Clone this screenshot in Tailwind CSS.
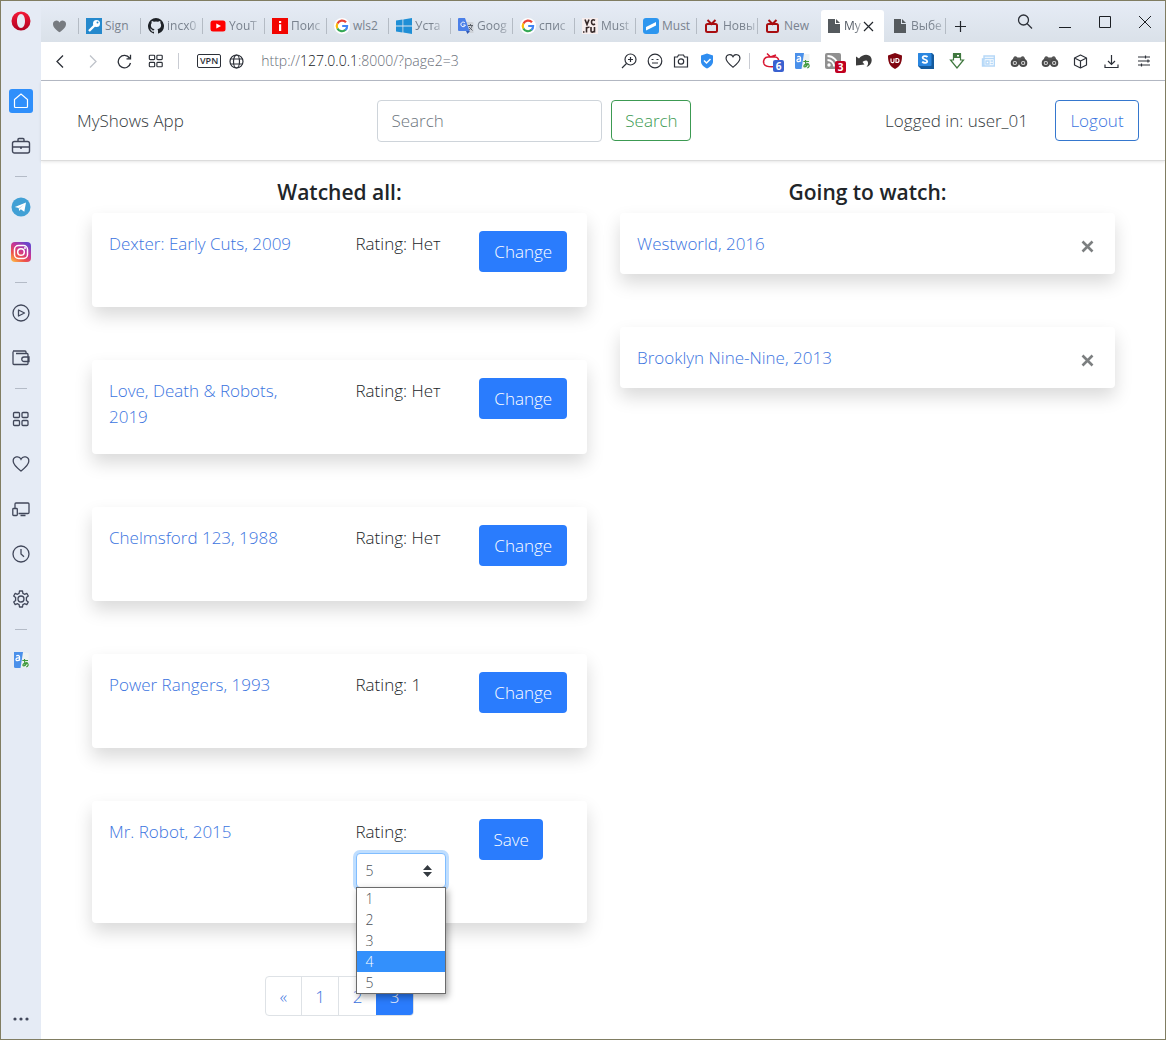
<!DOCTYPE html>
<html lang="en">
<head>
<meta charset="utf-8">
<title>MyShows App</title>
<script src="https://cdn.jsdelivr.net/npm/@tailwindcss/browser@4"></script>
</head>
<body class="flex min-h-screen border border-[#807d62] bg-white font-['Open_Sans','Noto_Sans',sans-serif] text-[17px] leading-[26px] font-[340] text-[#212529]">

<svg class="hidden" aria-hidden="true">
  <symbol id="google" viewBox="0 0 16 16"><circle cx="8" cy="8" r="8" fill="#fff"/><g fill="none" stroke-width="2.2"><path d="M12 4.3A5.2 5.2 0 0 0 3.4 5.6" stroke="#ea4335"/><path d="M3.4 5.5a5.2 5.2 0 0 0 0 5" stroke="#fbbc05"/><path d="M3.4 10.4a5.2 5.2 0 0 0 8.2 1.4" stroke="#34a853"/><path d="M11.4 12A5 5 0 0 0 13.1 8H8.2" stroke="#4285f4"/></g></symbol>
  <symbol id="tv" viewBox="0 0 16 16"><g fill="none" stroke="#a80d10" stroke-width="2"><rect x="2" y="6" width="11" height="8" rx="1.5"/><path d="M3.500 2l4 4 4-4"/></g></symbol>
  <symbol id="file" viewBox="0 0 16 16"><path d="M2 1h7v5h5v9H2z" fill="#555a5e"/><path d="M10 1l4 4h-4z" fill="#555a5e"/></symbol>
  <symbol id="heart" viewBox="0 0 18 18"><path d="M9 16C5 12.800 1.200 9.800 1.200 6.200A4.100 4.100 0 0 1 9 4.200a4.100 4.100 0 0 1 7.800 2C16.800 9.800 13 12.800 9 16z"/></symbol>
  <symbol id="tiles" viewBox="0 0 18 18"><rect x="1.500" y="2.500" width="6" height="5" rx="1"/><rect x="10" y="2.500" width="6" height="5" rx="1"/><rect x="1.500" y="10.500" width="6" height="5" rx="1"/><rect x="10" y="10.500" width="6" height="5" rx="1"/></symbol>
  <symbol id="translate" viewBox="0 0 18 18"><path d="M8 2h8.500v14.500H8z" fill="#eef2f2"/><path d="M2 1h9L8.500 17h-5A1.500 1.500 0 0 1 2 15.500z" fill="#4a90ea"/><path d="M4.200 5c2-1 3.300-.5 3.300 1v3.700M7.500 7c-2-.2-3.500.2-3.500 1.600 0 1.500 2.500 1.300 3.500 0" fill="none" stroke="#fff" stroke-width="1.300"/><path d="M10.300 9.500h5.700M12.500 8c0 3 .2 5.500.8 7M15.200 11c-.8 2.500-2.700 4.300-4 3.800-1.300-1.300 2-3.700 4.200-2.500 1.500 1 .7 3-1.100 3.500" fill="none" stroke="#3f9a3c" stroke-width="1.200"/></symbol>
  <symbol id="binoculars" viewBox="0 0 18 18"><path d="M1 11.500 3.500 5.500Q5 3 7.500 5.500h3Q13 3 14.500 5.500L17 11.500l-8 1z" fill="#555"/><g fill="#eee" stroke="#4a4a4a" stroke-width="2"><circle cx="4.800" cy="11" r="3.100"/><circle cx="13.200" cy="11" r="3.100"/></g><circle cx="4.800" cy="11" r="1.200" fill="#555"/><circle cx="13.200" cy="11" r="1.200" fill="#555"/></symbol>
</svg>

<aside class="flex w-10 shrink-0 flex-col items-center bg-[#e5ebf5]">
  <button class="flex h-[77px] w-10 justify-center pt-[10px]" aria-label="Opera menu"><svg class="size-5" viewBox="0 0 20 20"><defs><linearGradient id="og" x1="0" x2="0" y1="0" y2="1"><stop offset="0" stop-color="#f51a38"/><stop offset="1" stop-color="#b00020"/></linearGradient></defs><path fill="url(#og)" fill-rule="evenodd" d="M10 .5a9.500 9.500 0 1 0 0 19 9.500 9.500 0 0 0 0-19zM10 3c2.500 0 4 3 4 7s-1.500 7-4 7-4-3-4-7 1.500-7 4-7z"/></svg></button>
  <nav class="flex w-full grow flex-col items-center" aria-label="Sidebar">
    <a href="#" aria-label="Speed dial" class="flex h-[45px] items-center"><span class="flex size-6 items-center justify-center rounded-[3px] bg-[#2f8ffb]"><svg class="size-[18px]" viewBox="0 0 18 18" fill="none" stroke="#fff" stroke-width="1.200"><path d="M2.500 7.500 9 2l6.500 5.500v7a1 1 0 0 1-1 1h-11a1 1 0 0 1-1-1z"/></svg></span></a>
    <a href="#" aria-label="Workspace" class="flex h-[45px] items-center"><svg class="size-5" viewBox="0 0 20 20" fill="none" stroke="#41475a" stroke-width="1.400"><rect x="1.500" y="5.500" width="17" height="11.500" rx="2"/><path d="M7 5V3.500a1 1 0 0 1 1-1h4a1 1 0 0 1 1 1V5M1.500 11h17M9 12h2"/></svg></a>
    <span class="flex h-4 items-center"><i class="h-px w-3 bg-[#b4bbc7]"></i></span>
    <a href="#" aria-label="Telegram" class="flex h-[45px] items-center"><svg class="size-5" viewBox="0 0 20 20"><circle cx="10" cy="10" r="9.500" fill="#41a0d5"/><path d="M3.800 10 15 5.500 13.300 14.800 9.800 12.300 8.200 14l-.5-3z" fill="#fff"/><path d="M7.700 11 13 7.500l-4.500 4.300" fill="#b7d8ee"/></svg></a>
    <a href="#" aria-label="Instagram" class="flex h-[45px] items-center"><svg class="size-5" viewBox="0 0 20 20"><defs><linearGradient id="ig" x1="0" y1="1" x2=".7" y2="0"><stop offset="0" stop-color="#ffc94a"/><stop offset=".35" stop-color="#ee5348"/><stop offset=".65" stop-color="#c93494"/><stop offset="1" stop-color="#6a45cc"/></linearGradient></defs><rect width="20" height="20" rx="4" fill="url(#ig)"/><g fill="none" stroke="#fff" stroke-width="1.500"><rect x="3.500" y="3.500" width="13" height="13" rx="4"/><circle cx="10" cy="10" r="3.300"/></g><circle cx="14" cy="6" r="1" fill="#fff"/></svg></a>
    <span class="flex h-4 items-center"><i class="h-px w-3 bg-[#b4bbc7]"></i></span>
    <a href="#" aria-label="Player" class="flex h-[45px] items-center"><svg class="size-[18px]" viewBox="0 0 18 18" fill="none" stroke="#41475a" stroke-width="1.300"><circle cx="9" cy="9" r="8"/><path d="M6.500 6v6l6-3z" stroke-linejoin="round"/></svg></a>
    <a href="#" aria-label="Wallet" class="flex h-[45px] items-center"><svg class="size-[18px]" viewBox="0 0 18 18" fill="none" stroke="#41475a" stroke-width="1.300"><path d="M1 2.500v12a1 1 0 0 0 1 1h13a1 1 0 0 0 1-1v-9a1 1 0 0 0-1-1H4M1 2h12a1 1 0 0 1 1 1v1M17 8h-5a2 2 0 0 0 0 4.500h5z"/></svg></a>
    <span class="flex h-4 items-center"><i class="h-px w-3 bg-[#b4bbc7]"></i></span>
    <a href="#" aria-label="Tiles" class="flex h-[45px] items-center"><svg class="size-[18px] fill-none stroke-[#41475a]" stroke-width="1.300"><use href="#tiles"/></svg></a>
    <a href="#" aria-label="Bookmarks" class="flex h-[45px] items-center"><svg class="size-[18px] fill-none stroke-[#41475a]" stroke-width="1.300"><use href="#heart"/></svg></a>
    <a href="#" aria-label="My Flow" class="flex h-[45px] items-center"><svg class="size-[18px]" viewBox="0 0 18 18" fill="none" stroke="#41475a" stroke-width="1.300"><path d="M3 8V4a1 1 0 0 1 1-1h12a1 1 0 0 1 1 1v8.500a1 1 0 0 1-1 1H6.500M8.500 15.500h5"/><rect x=".8" y="8.500" width="4.500" height="7" rx=".8"/></svg></a>
    <a href="#" aria-label="History" class="flex h-[45px] items-center"><svg class="size-[18px]" viewBox="0 0 18 18" fill="none" stroke="#41475a" stroke-width="1.300"><circle cx="9" cy="9" r="8"/><path d="M9 4v5l3 2.800"/></svg></a>
    <a href="#" aria-label="Settings" class="flex h-[45px] items-center"><svg class="size-[18px]" viewBox="0 0 18 18" fill="none" stroke="#41475a" stroke-width="1.300" stroke-linejoin="round"><circle cx="9" cy="9" r="3"/><path d="M7.500 1h3l.4 2.400 1.600.9 2.300-.9 1.500 2.600-1.900 1.500v3l1.900 1.500-1.500 2.600-2.300-.9-1.600.9-.4 2.400h-3l-.4-2.400-1.600-.9-2.300.9L1.700 12l1.900-1.500v-3L1.700 6l1.500-2.600 2.300.9 1.600-.9z"/></svg></a>
    <span class="flex h-4 items-center"><i class="h-px w-3 bg-[#b4bbc7]"></i></span>
    <a href="#" aria-label="Translator" class="flex h-[45px] items-center"><svg class="size-[18px]"><use href="#translate"/></svg></a>
  </nav>
  <button class="flex h-10 w-10 items-center justify-center" aria-label="Sidebar setup"><svg class="h-1 w-4" viewBox="0 0 16 4" fill="#41475a"><circle cx="2" cy="2" r="1.600"/><circle cx="8" cy="2" r="1.600"/><circle cx="14" cy="2" r="1.600"/></svg></button>
</aside>

<div class="flex min-w-0 grow flex-col">
  <div class="flex h-[41px] items-end bg-linear-to-b from-[#e6ecf6] to-[#dae1e9] text-[12px] leading-4 font-normal text-[#79828e]">
    <button class="flex h-8 w-[37px] items-center justify-center" aria-label="Pinboards"><svg class="size-[15px] fill-[#777b80]"><use href="#heart"/></svg></button>
    <nav class="flex h-8 items-center" aria-label="Tabs">
      <a href="#" class="flex h-4 w-[62px] items-center border-l border-[#b4bbc4] pl-[7px]"><svg class="size-4 shrink-0" viewBox="0 0 16 16"><path fill="#2589cd" d="M0 0h16v16H0z"/><circle cx="10.500" cy="5.500" r="3.500" fill="#fff"/><path d="M9 7l-6 6" stroke="#fff" stroke-width="2.400"/><circle cx="11.500" cy="4.500" r="1" fill="#2589cd"/></svg><span class="ml-[3px]">Sign</span></a>
      <a href="#" class="flex h-4 w-[62px] items-center border-l border-[#b4bbc4] pl-[7px]"><svg class="size-4 shrink-0" viewBox="0 0 16 16" fill="#1e2227"><path d="M8 0a8 8 0 0 0-2.500 15.600c.4.100.5-.2.500-.4v-1.500c-2 .5-2.600-.9-2.800-1.300-.1-.3-.5-.9-.9-1.100-.3-.2-.7-.6 0-.6s1.200.6 1.300.8c.7 1.200 1.900.9 2.400.7 0-.5.300-.9.500-1.100-1.800-.2-3.600-.9-3.600-4 0-.9.300-1.600.8-2.100 0-.2-.4-1 .1-2.100 0 0 .7-.2 2.200.8a7.400 7.400 0 0 1 4 0c1.500-1 2.200-.8 2.200-.8.400 1.100.2 1.900.1 2.100.5.500.8 1.200.8 2.100 0 3.100-1.900 3.800-3.700 4 .3.200.6.700.6 1.500v2.600c0 .2.100.5.500.4A8 8 0 0 0 8 0z"/></svg><span class="ml-[3px] [mask-image:linear-gradient(to_right,black_70%,#0006)]">incx0</span></a>
      <a href="#" class="flex h-4 w-[62px] items-center border-l border-[#b4bbc4] pl-[7px]"><svg class="size-4 shrink-0" viewBox="0 0 16 16"><rect x=".5" y="2.500" width="15" height="11" rx="2.500" fill="#f00"/><path d="M6.300 5.500v5L11 8z" fill="#fff"/></svg><span class="ml-[3px] [mask-image:linear-gradient(to_right,black_70%,#0006)]">YouT</span></a>
      <a href="#" class="flex h-4 w-[62px] items-center border-l border-[#b4bbc4] pl-[7px]"><svg class="size-4 shrink-0" viewBox="0 0 16 16"><path fill="#f20500" d="M0 0h16v16H0z"/><path fill="#fff" d="M7 3h2.200v2H7zM7 6.200h2.200V13H7z"/></svg><span class="ml-[3px] [mask-image:linear-gradient(to_right,black_70%,#0006)]">Поис</span></a>
      <a href="#" class="flex h-4 w-[62px] items-center border-l border-[#b4bbc4] pl-[7px]"><svg class="size-4 shrink-0"><use href="#google"/></svg><span class="ml-[3px]">wls2</span></a>
      <a href="#" class="flex h-4 w-[62px] items-center border-l border-[#b4bbc4] pl-[7px]"><svg class="size-4 shrink-0" viewBox="0 0 16 16" fill="#1f8fd6"><path d="M0 2.500 6.500 1.500v6H0zM7.300 1.400 16 0v7.500H7.300zM0 8.400h6.500v6L0 13.500zM7.300 8.400H16V16l-8.700-1.400z"/></svg><span class="ml-[3px] [mask-image:linear-gradient(to_right,black_70%,#0006)]">Уста</span></a>
      <a href="#" class="flex h-4 w-[62px] items-center border-l border-[#b4bbc4] pl-[7px]"><svg class="size-4 shrink-0" viewBox="0 0 16 16"><path d="M6 4h8.500a1 1 0 0 1 1 1v10H9z" fill="#cfd3d9"/><path d="M1 0h6l4.500 13H1a1 1 0 0 1-1-1V1a1 1 0 0 1 1-1z" fill="#4c80e8"/><path d="M8 13h4l-2.500 3z" fill="#3059b5"/><path d="M7 5a2.300 2.300 0 1 0 .4 2H5.300" fill="none" stroke="#fff" stroke-width="1"/><path d="M10 7.500h5M12.500 6v1.500M14 8c-.5 2-2 3.500-3 4M11 9l3.500 3.500" fill="none" stroke="#5b6069"/></svg><span class="ml-[3px] [mask-image:linear-gradient(to_right,black_70%,#0006)]">Goog</span></a>
      <a href="#" class="flex h-4 w-[62px] items-center border-l border-[#b4bbc4] pl-[7px]"><svg class="size-4 shrink-0"><use href="#google"/></svg><span class="ml-[3px] [mask-image:linear-gradient(to_right,black_70%,#0006)]">спис</span></a>
      <a href="#" class="flex h-4 w-[61px] items-center border-l border-[#b4bbc4] pl-[7px]"><svg class="size-4 shrink-0" viewBox="0 0 16 16"><path fill="#f8eeee" d="M0 0h16v16H0z"/><path d="M3 1.500l2 5 2-5M13 2.500c-2-1.500-3.500-.5-3.500 1.500s1.500 3.500 3.500 2M4.500 14.500V9M4.500 10.500c.5-1.300 1.500-1.300 3-1.200M9 9v4c0 1.500 2.500 1.500 3.500 0V9v5.500M1 14h1.500" fill="none" stroke="#352828" stroke-width="1.600"/></svg><span class="ml-[3px] [mask-image:linear-gradient(to_right,black_70%,#0006)]">Must</span></a>
      <a href="#" class="flex h-4 w-[61px] items-center border-l border-[#b4bbc4] pl-[7px]"><svg class="size-4 shrink-0" viewBox="0 0 16 16"><rect width="16" height="16" rx="3" fill="#2d96ef"/><path d="M3 9 13 4v3.500L3 12.500z" fill="#fff"/></svg><span class="ml-[3px]">Must</span></a>
      <a href="#" class="flex h-4 w-[61px] items-center border-l border-[#b4bbc4] pl-[7px]"><svg class="size-4 shrink-0"><use href="#tv"/></svg><span class="ml-[3px] [mask-image:linear-gradient(to_right,black_70%,#0006)]">Новы</span></a>
      <a href="#" class="flex h-4 w-16 items-center border-l border-[#b4bbc4] pl-[7px]"><svg class="size-4 shrink-0"><use href="#tv"/></svg><span class="ml-[3px]">New</span></a>
      <div class="flex h-8 w-[63px] items-center rounded-t-[3px] bg-white pl-[5px] text-[#555c66]"><a href="#" class="flex items-center"><svg class="size-4 shrink-0"><use href="#file"/></svg><span class="ml-[2px] [mask-image:linear-gradient(to_right,black_60%,#0006)]">My</span></a><button class="flex size-4 items-center justify-center" aria-label="Close tab"><svg class="size-[11px]" viewBox="0 0 11 11" stroke="#22262c" stroke-width="1.200"><path d="M1 1l9 9M10 1l-9 9"/></svg></button></div>
      <a href="#" class="flex h-4 w-[62px] items-center border-r border-[#b4bbc4] pl-2"><svg class="size-4 shrink-0"><use href="#file"/></svg><span class="ml-[3px] [mask-image:linear-gradient(to_right,black_70%,#0006)]">Выбе</span></a>
      <button class="flex size-7 items-center justify-center" aria-label="New tab"><svg class="size-[11px]" viewBox="0 0 11 11" stroke="#22262c" stroke-width="1.200"><path d="M5.500 0v11M0 5.500h11"/></svg></button>
    </nav>
    <div class="ml-auto flex h-[41px]">
      <button class="flex w-10 items-center justify-center" aria-label="Search tabs"><svg class="size-4" viewBox="0 0 16 16" fill="none" stroke="#2c3038" stroke-width="1.300"><circle cx="6.500" cy="6" r="5"/><path d="M10 9.500l5 5"/></svg></button>
      <button class="flex w-10 items-center justify-center" aria-label="Minimize"><svg class="h-3 w-3" viewBox="0 0 12 12" stroke="#1c1f24"><path d="M0 11.500h12"/></svg></button>
      <button class="flex w-10 items-center justify-center" aria-label="Maximize"><svg class="h-3 w-3" viewBox="0 0 12 12" stroke="#1c1f24" fill="none"><path d="M.5.500h11v11H.5z"/></svg></button>
      <button class="flex w-10 items-center justify-center" aria-label="Close"><svg class="h-3 w-3" viewBox="0 0 12 12" stroke="#1c1f24"><path d="M0 0l12 12M12 0 0 12"/></svg></button>
    </div>
  </div>

  <div class="flex h-[39px] items-center border-b border-[#b5bac6] pr-1 pl-[3px] text-[14px]">
    <button class="flex w-8 justify-center" aria-label="Back"><svg class="size-[15px]" viewBox="0 0 15 15" fill="none" stroke="#2c3038" stroke-width="1.300"><path d="M10 1.500l-6 6 6 6"/></svg></button>
    <button class="flex w-8 justify-center" aria-label="Forward"><svg class="size-[15px]" viewBox="0 0 15 15" fill="none" stroke="#bfc3ca" stroke-width="1.300"><path d="M5 1.500l6 6-6 6"/></svg></button>
    <button class="flex w-8 justify-center" aria-label="Reload"><svg class="size-[15px]" viewBox="0 0 15 15" fill="none" stroke="#2c3038" stroke-width="1.300"><path d="M13.500 9A6.200 6.200 0 1 1 12.500 4M13.500.800v4h-4"/></svg></button>
    <button class="flex w-8 justify-center" aria-label="Speed dial"><svg class="size-4 fill-none stroke-[#2c3038]" stroke-width="1.300"><use href="#tiles"/></svg></button>
    <i class="ml-1.5 h-4 w-px bg-[#c9ccd3]"></i>
    <button class="ml-[18px] h-[14px] rounded-[2px] border border-[#2c3038] px-[2px] text-[9px] leading-[12px] font-semibold text-[#2c3038]">VPN</button>
    <svg class="ml-2 size-[15px] shrink-0" viewBox="0 0 15 15" fill="none" stroke="#2c3038" stroke-width="1.200"><circle cx="7.500" cy="7.500" r="6.500"/><ellipse cx="7.500" cy="7.500" rx="3" ry="6.500"/><path d="M1.500 5h12M1.500 10h12"/></svg>
    <div class="ml-[17px] grow whitespace-nowrap text-[#696e78]" role="textbox" aria-label="Address">http://<span class="text-[#15181c]">127.0.0.1</span>:8000/?page2=3</div>
    <button class="flex w-[26px] justify-center" aria-label="Zoom"><svg class="size-4" viewBox="0 0 16 16" fill="none" stroke="#2c3038" stroke-width="1.200"><circle cx="9.500" cy="6.500" r="5.500"/><path d="M5.500 10.500l-4.500 4.500M7 6.500h5M9.500 4v5"/></svg></button>
    <button class="flex w-[26px] justify-center" aria-label="Reader"><svg class="size-4" viewBox="0 0 16 16" fill="none" stroke="#2c3038" stroke-width="1.200"><circle cx="8" cy="8" r="6.800"/><path d="M4.500 6.500h2M9.500 6.500h2M5 10h6"/></svg></button>
    <button class="flex w-[26px] justify-center" aria-label="Snapshot"><svg class="size-4" viewBox="0 0 16 16" fill="none" stroke="#2c3038" stroke-width="1.200"><path d="M1.500 4h3l1-2h5l1 2h3v10h-13z"/><circle cx="8" cy="8.500" r="2.700"/></svg></button>
    <button class="flex w-[26px] justify-center" aria-label="Ad blocker"><svg class="size-4" viewBox="0 0 16 16"><path d="M8 .500 14 2.500v6c0 3.500-3 5.500-6 7-3-1.500-6-3.500-6-7v-6z" fill="#2f8df0"/><path d="M5 7.500l2.500 2.500L11.500 6" fill="none" stroke="#fff" stroke-width="1.500"/></svg></button>
    <button class="flex w-[26px] justify-center" aria-label="Save to pinboard"><svg class="size-4 fill-none stroke-[#2c3038]" stroke-width="1.300"><use href="#heart"/></svg></button>
    <i class="mr-[5px] ml-[3px] h-4 w-px bg-[#c9ccd3]"></i>
    <button class="relative flex w-[31px] justify-center" aria-label="MyShows, 6 new"><svg class="size-[18px]" viewBox="0 0 18 18" fill="none" stroke="#d81530" stroke-width="1.500"><path d="M16 13c0 2-12 3-14-1C.5 8 3 5 6 5h7c3 0 4 3 4 6M5 1.500 8.500 5 14 3" /></svg><span class="absolute top-2 right-0.5 flex h-3 w-[11px] items-center justify-center rounded-[2px] bg-[#3a61d0] text-[10px] font-bold text-white">6</span></button>
    <button class="flex w-[31px] justify-center" aria-label="Translator"><svg class="size-[18px]"><use href="#translate"/></svg></button>
    <button class="relative flex w-[31px] justify-center" aria-label="Feeds, 3 new"><svg class="size-4" viewBox="0 0 16 16"><rect width="16" height="16" rx="2" fill="#909090"/><circle cx="4" cy="12" r="1.700" fill="#fff"/><path d="M2.500 7A6.500 6.500 0 0 1 9 13.500M2.500 3A10.500 10.500 0 0 1 13 13.500" fill="none" stroke="#fff" stroke-width="1.800"/></svg><span class="absolute top-2 right-0.5 flex h-3 w-[11px] items-center justify-center rounded-[2px] bg-[#c00020] text-[10px] font-bold text-white">3</span></button>
    <button class="flex w-[31px] justify-center" aria-label="Undo close"><svg class="size-4" viewBox="0 0 16 16" fill="#3c3c3c"><path d="M0 3.500l3 2C6 2 10 1 13 2.500c3 1.500 3.500 5.500 1.500 8.500-1 1.500-2.500 2.500-4 3 2-2.500 2-5 .5-6.200C9.500 7 7.500 8 6.500 9l2 2.500L0 12.500z"/></svg></button>
    <button class="flex w-[31px] justify-center" aria-label="uBlock"><svg class="size-4" viewBox="0 0 16 16"><path d="M8 0l7 2.500c0 6-1 10.500-7 13.500C2 13 1 8.500 1 2.500z" fill="#800610"/><path d="M4 5.500v2.700a1.500 1.500 0 0 0 3 0V5.500M9 5.500h1a2 2 0 0 1 0 4H9z" fill="none" stroke="#fff" stroke-width="1.200"/></svg></button>
    <button class="flex w-[31px] justify-center" aria-label="Stylish"><svg class="size-4" viewBox="0 0 16 16"><path d="M1 0h13l2 2v14H3l-3-3V1z" fill="#155a9c"/><rect width="13.500" height="13" rx="1" fill="#2a86e0"/><path d="M9.500 4C8 2.500 4.500 3 4.700 5c.2 1.800 4.500 1.200 4.500 3.200 0 2-3.400 2-5 .6" fill="none" stroke="#fff" stroke-width="1.800"/></svg></button>
    <button class="flex w-[31px] justify-center" aria-label="Downloader"><svg class="size-4" viewBox="0 0 16 16"><path d="M4.500 1h7v6h3L8 15 1.500 7h3z" fill="#fff" stroke="#40783f" stroke-width="1.200"/><path d="M4 0h8v5H4z" fill="#40783f"/><path d="M8 2h2v1.500H8z" fill="#fff"/></svg></button>
    <button class="flex w-[31px] justify-center" aria-label="News"><svg class="size-[14px]" viewBox="0 0 14 14" fill="none" stroke="#b5d8f8" stroke-width="1.400"><path d="M3 2h10.300v10H1.500V5H3zM3 4.500h10M5 7h3v3H5zM9.500 7H12M9.500 9.500H12M3 5v7"/></svg></button>
    <button class="flex w-[31px] justify-center" aria-label="Finder"><svg class="size-[18px]"><use href="#binoculars"/></svg></button>
    <button class="flex w-[31px] justify-center" aria-label="Finder 2"><svg class="size-[18px]"><use href="#binoculars"/></svg></button>
    <button class="flex w-[31px] justify-center" aria-label="Extensions"><svg class="size-[15px]" viewBox="0 0 15 15" fill="none" stroke="#2c3038" stroke-width="1.200" stroke-linejoin="round"><path d="M7.500 1l6 3v7l-6 3-6-3V4zM1.500 4l6 3 6-3M7.500 7v7"/></svg></button>
    <button class="flex w-[31px] justify-center" aria-label="Downloads"><svg class="size-[15px]" viewBox="0 0 15 15" fill="none" stroke="#2c3038" stroke-width="1.200"><path d="M7.500 1v9M4 7l3.500 3.500L11 7M1 10.500v3h13v-3"/></svg></button>
    <button class="flex w-[34px] justify-center" aria-label="Easy setup"><svg class="size-[14px]" viewBox="0 0 14 14" fill="none" stroke="#2c3038" stroke-width="1.200"><path d="M1 3h12M1 7h12M1 11h12M8.500 1.500v3M11 5.500v3M4.500 9.500v3"/></svg></button>
  </div>

  <div class="grow">
    <header class="relative flex h-20 items-center justify-between border-b border-[#dcdcdc] pr-[26px] pl-9 shadow-[0_1px_3px_rgba(0,0,0,0.10)]">
      <a href="#" class="text-[#343a40]">MyShows App</a>
      <form class="flex items-center gap-[9px]">
        <input type="search" aria-label="Search" placeholder="Search" class="h-[42px] w-[225px] rounded-[4px] border border-[#ced4da] bg-white px-[13px] placeholder:text-[#6c757d]">
        <button type="button" class="h-[41px] w-20 rounded-[4px] border border-[#3c9a52] text-[#3c9a52]">Search</button>
      </form>
      <div class="flex items-center gap-[27px]">
        <span class="text-[#343a40]">Logged in: user_01</span>
        <button class="h-[41px] w-[84px] rounded-[4px] border border-[#3577ce] text-[#3b74e0]">Logout</button>
      </div>
    </header>

    <main class="grid grid-cols-2 items-start gap-[33px] pt-[18px] pr-[50px] pb-[23px] pl-[51px]">
      <section>
        <h2 class="mb-[7px] text-center text-[21px] leading-[27px] font-semibold">Watched all:</h2>
        <div class="flex flex-col gap-[53px]">
          <article class="grid min-h-[94px] grid-cols-[2fr_1fr_1fr] rounded-[4px] bg-white py-[18px] shadow-[0_9px_18px_rgba(0,0,0,0.15)]">
            <div class="px-[17px]"><a href="#" class="text-[#3b74e0]">Dexter: Early Cuts, 2009</a></div><div class="pl-4">Rating: Нет</div><div class="pl-4"><button class="h-[41px] w-[88px] rounded-[4px] bg-[#2a7cfd] text-white">Change</button></div>
          </article>
          <article class="grid min-h-[94px] grid-cols-[2fr_1fr_1fr] rounded-[4px] bg-white py-[18px] shadow-[0_9px_18px_rgba(0,0,0,0.15)]">
            <div class="pr-6 pl-[17px]"><a href="#" class="text-[#3b74e0]">Love, Death &amp; Robots, 2019</a></div><div class="pl-4">Rating: Нет</div><div class="pl-4"><button class="h-[41px] w-[88px] rounded-[4px] bg-[#2a7cfd] text-white">Change</button></div>
          </article>
          <article class="grid min-h-[94px] grid-cols-[2fr_1fr_1fr] rounded-[4px] bg-white py-[18px] shadow-[0_9px_18px_rgba(0,0,0,0.15)]">
            <div class="px-[17px]"><a href="#" class="text-[#3b74e0]">Chelmsford 123, 1988</a></div><div class="pl-4">Rating: Нет</div><div class="pl-4"><button class="h-[41px] w-[88px] rounded-[4px] bg-[#2a7cfd] text-white">Change</button></div>
          </article>
          <article class="grid min-h-[94px] grid-cols-[2fr_1fr_1fr] rounded-[4px] bg-white py-[18px] shadow-[0_9px_18px_rgba(0,0,0,0.15)]">
            <div class="px-[17px]"><a href="#" class="text-[#3b74e0]">Power Rangers, 1993</a></div><div class="pl-4">Rating: 1</div><div class="pl-4"><button class="h-[41px] w-[88px] rounded-[4px] bg-[#2a7cfd] text-white">Change</button></div>
          </article>
          <article class="grid min-h-[122px] grid-cols-[2fr_1fr_1fr] rounded-[4px] bg-white py-[18px] shadow-[0_9px_18px_rgba(0,0,0,0.15)]">
            <div class="px-[17px]"><a href="#" class="text-[#3b74e0]">Mr. Robot, 2015</a></div>
            <div class="pl-4">
              <label for="rating">Rating:</label>
              <div class="relative mt-2 w-[90px] text-[14px] text-[#495057]">
                <select id="rating" class="block h-[35px] w-full appearance-none rounded-[4px] border border-[#80bdff] bg-white pl-[9px] ring-3 ring-[#bfdeff]"><option>1</option><option>2</option><option>3</option><option>4</option><option selected>5</option></select>
                <svg class="pointer-events-none absolute top-3 right-[14px] h-3 w-[9px]" viewBox="0 0 9 12" fill="#343a40"><path d="M4.500 0 9 5H0zM4.500 12 0 7h9z"/></svg>
                <ul role="listbox" aria-label="Rating" class="absolute top-[34px] left-0 z-10 w-full border border-[#6b6b6b] bg-white leading-[21px] shadow-[2px_3px_7px_rgba(0,0,0,0.35)]">
                  <li role="option" class="pl-[9px]">1</li><li role="option" class="pl-[9px]">2</li><li role="option" class="pl-[9px]">3</li><li role="option" aria-selected="true" class="bg-[#3390fc] pl-[9px] text-white">4</li><li role="option" class="pl-[9px]">5</li>
                </ul>
              </div>
            </div>
            <div class="pl-4"><button class="h-[41px] w-16 rounded-[4px] bg-[#2a7cfd] text-white">Save</button></div>
          </article>
          <nav class="flex justify-center" aria-label="Pages">
            <div class="flex h-10 overflow-hidden rounded-[4px] border border-[#dee2e6] text-center leading-[40px] text-[#3b74e0]">
              <a href="#" class="w-9 border-r border-[#dee2e6]">«</a><a href="#" class="w-[37px] border-r border-[#dee2e6]">1</a><a href="#" class="w-[37px]">2</a><a href="#" aria-current="page" class="w-[37px] bg-[#2a7cfd] text-white">3</a>
            </div>
          </nav>
        </div>
      </section>
      <section>
        <h2 class="mb-[7px] text-center text-[21px] leading-[27px] font-semibold">Going to watch:</h2>
        <div class="flex flex-col gap-[53px]">
          <article class="flex h-[61px] justify-between rounded-[4px] bg-white pt-[18px] pr-[21px] pl-[17px] shadow-[0_9px_18px_rgba(0,0,0,0.15)]">
            <a href="#" class="text-[#3b74e0]">Westworld, 2016</a><button class="flex h-[30px] items-center" aria-label="Remove Westworld"><svg class="size-[13px]" viewBox="0 0 13 13" stroke="#7c7f80" stroke-width="2.600"><path d="M1.500 1.500l10 10M11.500 1.500l-10 10"/></svg></button>
          </article>
          <article class="flex h-[61px] justify-between rounded-[4px] bg-white pt-[18px] pr-[21px] pl-[17px] shadow-[0_9px_18px_rgba(0,0,0,0.15)]">
            <a href="#" class="text-[#3b74e0]">Brooklyn Nine-Nine, 2013</a><button class="flex h-[30px] items-center" aria-label="Remove Brooklyn Nine-Nine"><svg class="size-[13px]" viewBox="0 0 13 13" stroke="#7c7f80" stroke-width="2.600"><path d="M1.500 1.500l10 10M11.500 1.500l-10 10"/></svg></button>
          </article>
        </div>
      </section>
    </main>
  </div>
</div>
</body>
</html>
